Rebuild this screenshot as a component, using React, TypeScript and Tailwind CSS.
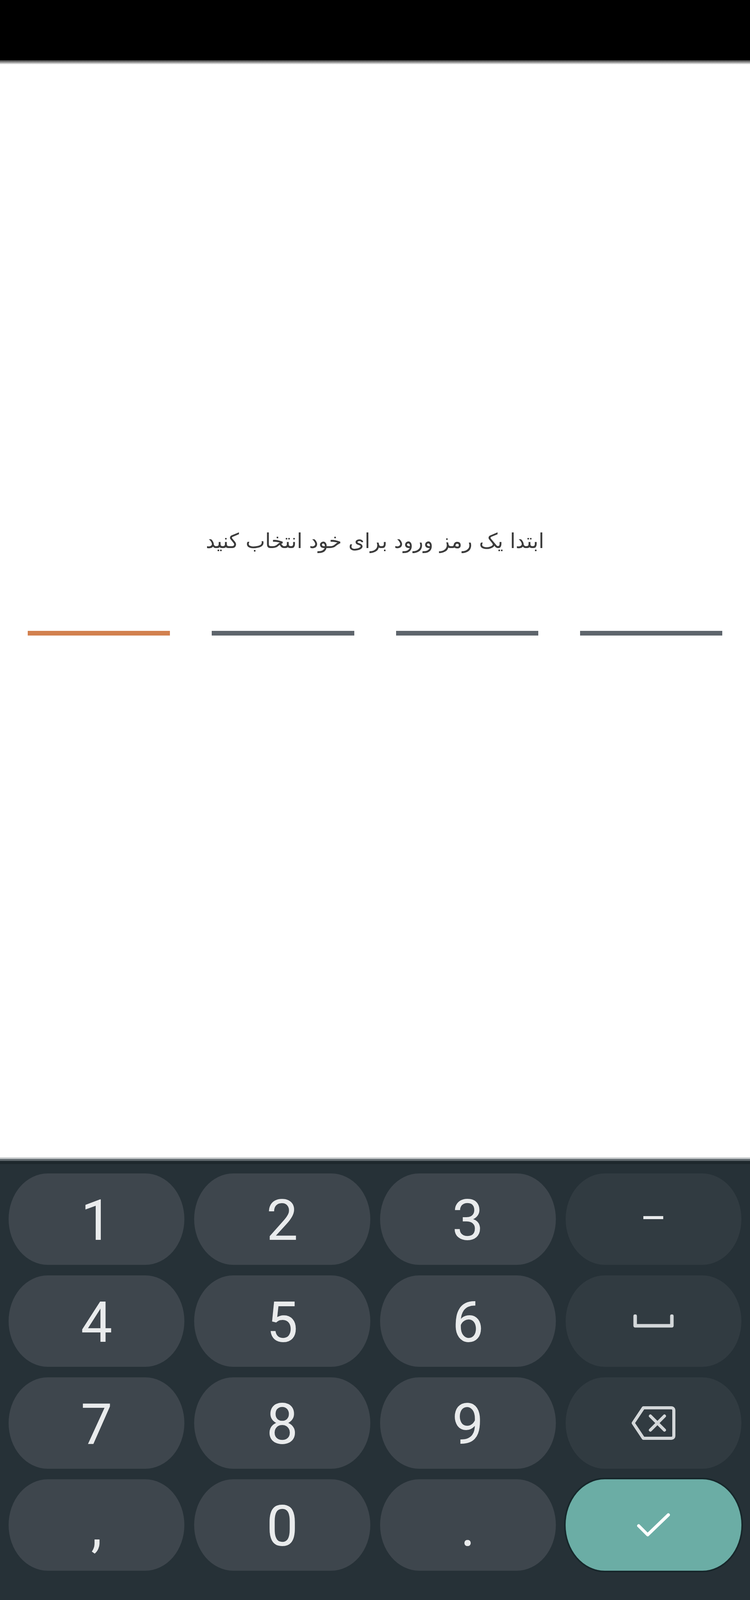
import React from 'react';

function SpaceIcon() {
  return (
    <svg width="104" height="34" viewBox="0 0 104 34" fill="none">
      <path d="M5 4 V29 H99 V4" stroke="#d3d7d9" strokeWidth="9" strokeLinejoin="round" strokeLinecap="round" />
    </svg>
  );
}

function BackspaceIcon() {
  return (
    <svg width="116" height="90" viewBox="0 0 116 90" fill="none">
      <path
        d="M32 6 H104 a6 6 0 0 1 6 6 V78 a6 6 0 0 1 -6 6 H32 L6 45 Z"
        stroke="#d3d7d9"
        strokeWidth="8"
        strokeLinejoin="round"
      />
      <path d="M50 27 L86 63 M86 27 L50 63" stroke="#d3d7d9" strokeWidth="8" strokeLinecap="round" />
    </svg>
  );
}

function CheckIcon() {
  return (
    <svg width="86" height="62" viewBox="0 0 86 62" fill="none">
      <path d="M5 33 L28 56 L81 5" stroke="#ffffff" strokeWidth="8" strokeLinecap="round" strokeLinejoin="round" />
    </svg>
  );
}

type KeyKind = 'digit' | 'func' | 'ok';

function Key({ kind, children }: { kind: KeyKind; children: React.ReactNode }) {
  const base = 'h-[234px] rounded-[100px/117px] flex items-center justify-center';
  if (kind === 'ok') {
    return <div className={`${base} bg-[#6bada5] shadow-[0_0_0_4px_#17272b]`}>{children}</div>;
  }
  if (kind === 'func') {
    return <div className={`${base} bg-[#313b41]`}>{children}</div>;
  }
  return <div className={`${base} bg-[#3e464d]`}>{children}</div>;
}

function Label({ children }: { children: React.ReactNode }) {
  return (
    <span className="font-['Roboto',sans-serif] text-[144px] leading-none text-[#e9ebec] translate-y-[4px]">
      {children}
    </span>
  );
}

export default function App() {
  return (
    <div className="w-[1920px] h-[4267px] flex flex-col bg-white overflow-hidden">
      <div className="h-[154px] bg-black shrink-0" />
      <div className="h-[11px] shrink-0 bg-linear-to-b from-[#3a3a3a] to-white" />

      <main className="flex-1 flex flex-col items-center pt-[1180px]">
        <p
          dir="rtl"
          className="font-['DejaVu_Sans',sans-serif] text-[53px] leading-[80px] text-[#3b3b3b]"
        >
          ابتدا یک رمز ورود برای خود انتخاب کنید
        </p>

        <div className="mt-[190px] w-full px-[71px] grid grid-cols-4 gap-x-[107px]">
          <div className="h-[12px] bg-[#d2814f]" />
          <div className="h-[12px] bg-[#5e656c]" />
          <div className="h-[12px] bg-[#5e656c]" />
          <div className="h-[12px] bg-[#5e656c]" />
        </div>
      </main>

      <section className="h-[1304px] shrink-0 flex flex-col bg-[#263137]">
        <div className="h-[4px] bg-[#c3c7c9]" />
        <div className="h-[5px] bg-[#5f686d]" />
        <div className="h-[8px] bg-[#1e282d]" />
        <div className="pt-[24px] px-[22px] grid grid-cols-4 gap-x-[25px] gap-y-[27px]">
          <Key kind="digit"><Label>1</Label></Key>
          <Key kind="digit"><Label>2</Label></Key>
          <Key kind="digit"><Label>3</Label></Key>
          <Key kind="func">
            <span className="font-['Roboto',sans-serif] text-[104px] leading-none text-[#e9ebec] -translate-y-[2px]">–</span>
          </Key>

          <Key kind="digit"><Label>4</Label></Key>
          <Key kind="digit"><Label>5</Label></Key>
          <Key kind="digit"><Label>6</Label></Key>
          <Key kind="func"><SpaceIcon /></Key>

          <Key kind="digit"><Label>7</Label></Key>
          <Key kind="digit"><Label>8</Label></Key>
          <Key kind="digit"><Label>9</Label></Key>
          <Key kind="func"><BackspaceIcon /></Key>

          <Key kind="digit"><Label>,</Label></Key>
          <Key kind="digit"><Label>0</Label></Key>
          <Key kind="digit"><Label>.</Label></Key>
          <Key kind="ok"><CheckIcon /></Key>
        </div>
      </section>
    </div>
  );
}
